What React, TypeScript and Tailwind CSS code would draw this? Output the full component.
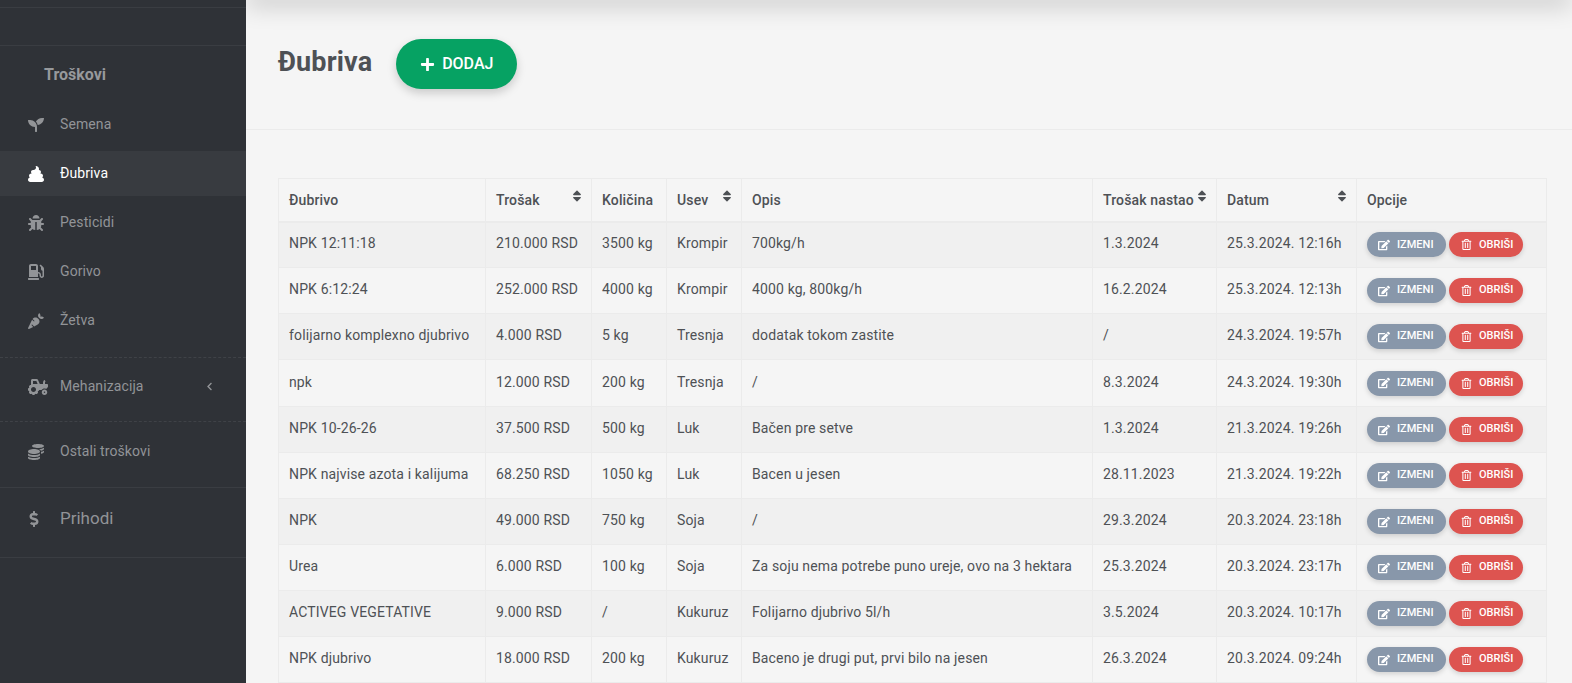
import React from "react";
import { FaSeedling, FaPoop, FaBug, FaGasPump, FaCarrot, FaTractor, FaCoins, FaDollarSign, FaEdit, FaRegTrashAlt, FaPlus, FaChevronLeft, FaSort } from "react-icons/fa";

const rows = [
  ["NPK 12:11:18", "210.000 RSD", "3500 kg", "Krompir", "700kg/h", "1.3.2024", "25.3.2024. 12:16h"],
  ["NPK 6:12:24", "252.000 RSD", "4000 kg", "Krompir", "4000 kg, 800kg/h", "16.2.2024", "25.3.2024. 12:13h"],
  ["folijarno komplexno djubrivo", "4.000 RSD", "5 kg", "Tresnja", "dodatak tokom zastite", "/", "24.3.2024. 19:57h"],
  ["npk", "12.000 RSD", "200 kg", "Tresnja", "/", "8.3.2024", "24.3.2024. 19:30h"],
  ["NPK 10-26-26", "37.500 RSD", "500 kg", "Luk", "Bačen pre setve", "1.3.2024", "21.3.2024. 19:26h"],
  ["NPK najvise azota i kalijuma", "68.250 RSD", "1050 kg", "Luk", "Bacen u jesen", "28.11.2023", "21.3.2024. 19:22h"],
  ["NPK", "49.000 RSD", "750 kg", "Soja", "/", "29.3.2024", "20.3.2024. 23:18h"],
  ["Urea", "6.000 RSD", "100 kg", "Soja", "Za soju nema potrebe puno ureje, ovo na 3 hektara", "25.3.2024", "20.3.2024. 23:17h"],
  ["ACTIVEG VEGETATIVE", "9.000 RSD", "/", "Kukuruz", "Folijarno djubrivo 5l/h", "3.5.2024", "20.3.2024. 10:17h"],
  ["NPK djubrivo", "18.000 RSD", "200 kg", "Kukuruz", "Baceno je drugi put, prvi bilo na jesen", "26.3.2024", "20.3.2024. 09:24h"],
];

const headers: [string, boolean, string][] = [
  ["Đubrivo", false, "w-[207px]"],
  ["Trošak", true, "w-[106px]"],
  ["Količina", false, "w-[75px]"],
  ["Usev", true, "w-[75px]"],
  ["Opis", false, "w-[351px]"],
  ["Trošak nastao", true, "w-[124px]"],
  ["Datum", true, "w-[140px]"],
  ["Opcije", false, "w-[190px]"],
];

function NavItem({ icon, label, active }: { icon: React.ReactNode; label: string; active?: boolean }) {
  return (
    <div className={`mb-[4px] flex h-[45px] items-center pl-[28px] text-[14px] tracking-[0.1px] ${active ? "bg-[#383b40] text-white" : "text-[#929497]"}`}>
      <span className="flex w-[32px] shrink-0 text-[16px]">{icon}</span>
      <span>{label}</span>
    </div>
  );
}

function Sidebar() {
  return (
    <aside className="flex h-full w-[246px] shrink-0 flex-col bg-[#2f3237]">
      <div className="h-[8px] shrink-0 border-b border-[#3a3d42]" />
      <div className="h-[38px] shrink-0 border-b border-[#3a3d42]" />
      <div className="flex h-[55px] shrink-0 items-center pl-[44px] pt-[2px] text-[16px] font-bold text-[#97999c]">Troškovi</div>
      <div className="flex shrink-0 flex-col pt-[1px]">
        <NavItem icon={<FaSeedling />} label="Semena" />
        <NavItem icon={<FaPoop />} label="Đubriva" active />
        <NavItem icon={<FaBug />} label="Pesticidi" />
        <NavItem icon={<FaGasPump />} label="Gorivo" />
        <NavItem icon={<FaCarrot />} label="Žetva" />
      </div>
      <div className="mt-[10px] flex h-[65px] shrink-0 items-center border-y border-dashed border-[#3f4247] pb-[6px] pl-[28px] pr-[32px] text-[14px] tracking-[0.1px] text-[#929497]">
        <span className="flex w-[32px] shrink-0 text-[20px]"><FaTractor /></span>
        <span className="flex-1">Mehanizacija</span>
        <FaChevronLeft className="text-[9px]" />
      </div>
      <div className="flex h-[66px] shrink-0 items-center border-b border-[#3a3d42] pb-[6px] pl-[28px] text-[14px] tracking-[0.1px] text-[#929497]">
        <span className="flex w-[32px] shrink-0 text-[16px]"><FaCoins /></span>
        <span>Ostali troškovi</span>
      </div>
      <div className="flex h-[70px] shrink-0 items-center border-b border-[#3a3d42] pb-[7px] pl-[28px] text-[17px] text-[#929497]">
        <span className="flex w-[32px] shrink-0 text-[16px]"><FaDollarSign className="-ml-[2px]" /></span>
        <span>Prihodi</span>
      </div>
    </aside>
  );
}

function Actions() {
  return (
    <div className="flex gap-[3px] tracking-normal">
      <button className="flex h-[25px] w-[79px] items-center rounded-full bg-[#8897aa] pl-[11px] text-[11px] font-medium text-white shadow-[0_2px_5px_rgba(0,0,0,0.15)]">
        <FaEdit className="mr-[7px] text-[12px]" />IZMENI
      </button>
      <button className="flex h-[25px] w-[74px] items-center rounded-full bg-[#dd5450] pl-[12px] text-[11px] font-medium text-white shadow-[0_2px_5px_rgba(0,0,0,0.15)]">
        <FaRegTrashAlt className="mr-[7px] text-[11px]" />OBRIŠI
      </button>
    </div>
  );
}

export default function App() {
  return (
    <div className="flex h-screen w-full overflow-hidden bg-[#f5f5f5] font-['Roboto',sans-serif] text-[14px] text-[#4e5155]">
      <Sidebar />
      <main className="relative min-w-0 flex-1 overflow-hidden">
        <div className="absolute inset-x-0 -top-[12px] h-[12px] shadow-[0_4px_24px_rgba(0,0,0,0.25)]" />
        <div className="flex h-[130px] items-start border-b border-[#ebebeb] pl-[32px] pt-[39px]">
          <h1 className="mt-[5px] text-[27px] font-bold leading-[36px] tracking-[0.15px] text-[#4e5155]">Đubriva</h1>
          <button className="ml-[24px] flex h-[50px] w-[121px] items-center justify-center rounded-full bg-[#06a263] text-[16px] font-medium text-white shadow-[0_4px_10px_rgba(0,0,0,0.18)]">
            <FaPlus className="mr-[7px] text-[15px]" />DODAJ
          </button>
        </div>
        <div className="pl-[32px] pt-[48px]">
          <table className="w-[1268px] table-fixed border-collapse tracking-[0.14px]">
            <thead>
              <tr className="h-[43px]">
                {headers.map(([h, sort, w]) => (
                  <th key={h} className={`relative border border-b-2 border-[#ebebeb] px-[10px] pt-[2px] text-left font-medium ${w}`}>
                    {h}
                    {sort && <FaSort className="absolute right-[7px] top-[10px] text-[14px]" />}
                  </th>
                ))}
              </tr>
            </thead>
            <tbody>
              {rows.map((r, i) => (
                <tr key={i} className={`${i === 3 ? "h-[47px]" : "h-[46px]"} ${i % 2 === 0 ? "bg-[#f0f0f0]" : ""}`}>
                  {r.map((c, j) => (
                    <td key={j} className="whitespace-nowrap border border-[#ebebeb] px-[10px] pb-[2px]">{c}</td>
                  ))}
                  <td className="border border-[#ebebeb] px-[10px]"><Actions /></td>
                </tr>
              ))}
            </tbody>
          </table>
        </div>
      </main>
    </div>
  );
}
